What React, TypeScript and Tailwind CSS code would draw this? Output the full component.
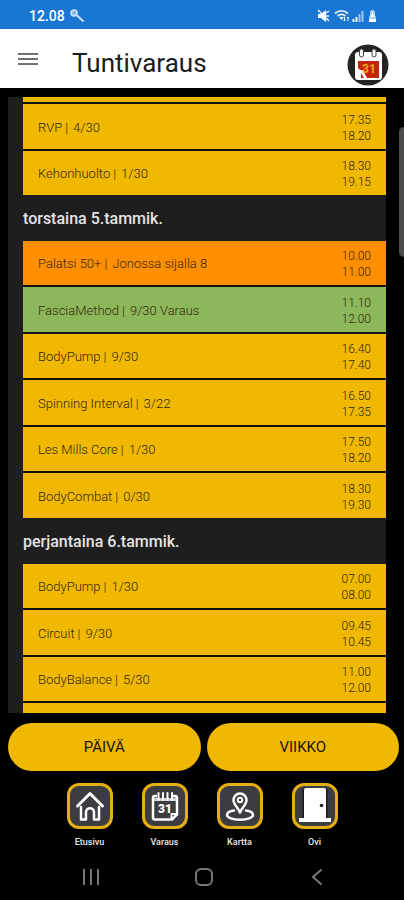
import React from "react";
import clsx from "clsx";

type Status = "open" | "queued" | "booked";

interface GymClass {
  name: string;
  info: string;
  start: string;
  end: string;
  status?: Status;
}

interface Day {
  title?: string;
  classes: (GymClass | null)[];
}

// null is a row that is scrolled out of view
const days: Day[] = [
  {
    classes: [
      null,
      { name: "RVP", info: "4/30", start: "17.35", end: "18.20" },
      { name: "Kehonhuolto", info: "1/30", start: "18.30", end: "19.15" },
    ],
  },
  {
    title: "torstaina 5.tammik.",
    classes: [
      { name: "Palatsi 50+", info: "Jonossa sijalla 8", start: "10.00", end: "11.00", status: "queued" },
      { name: "FasciaMethod", info: "9/30 Varaus", start: "11.10", end: "12.00", status: "booked" },
      { name: "BodyPump", info: "9/30", start: "16.40", end: "17.40" },
      { name: "Spinning Interval", info: "3/22", start: "16.50", end: "17.35" },
      { name: "Les Mills Core", info: "1/30", start: "17.50", end: "18.20" },
      { name: "BodyCombat", info: "0/30", start: "18.30", end: "19.30" },
    ],
  },
  {
    title: "perjantaina 6.tammik.",
    classes: [
      { name: "BodyPump", info: "1/30", start: "07.00", end: "08.00" },
      { name: "Circuit", info: "9/30", start: "09.45", end: "10.45" },
      { name: "BodyBalance", info: "5/30", start: "11.00", end: "12.00" },
      null,
    ],
  },
];

const statusColors: Record<Status, string> = {
  open: "bg-[#f0b800]",
  queued: "bg-[#ff8f00]",
  booked: "bg-[#8db75b]",
};

const rowClass = "h-[44px] even:h-[45px] shrink-0";

const ClassRow: React.FC<{ item: GymClass }> = ({ item }) => (
  <li className={clsx(rowClass, statusColors[item.status ?? "open"])}>
    <button type="button" className="flex h-full w-full items-center justify-between px-[15px] pt-0.5 text-left font-light text-[#33270a]">
      <span className="flex gap-[3px] text-[13px] leading-4">
        <span>{item.name}</span>
        <span>|</span>
        <span className="ml-0.5">{item.info}</span>
      </span>
      <span className="flex flex-col text-xs leading-4">
        <time>{item.start}</time>
        <time>{item.end}</time>
      </span>
    </button>
  </li>
);

const StatusBar = () => (
  <div className="flex h-[29px] shrink-0 items-center justify-between bg-[#1976d2] pr-[27px] pl-[29px] text-white">
    <div className="flex items-center gap-1 pt-[3px]">
      <span className="text-sm leading-4 font-medium">12.08</span>
      <svg width="16" height="16" viewBox="0 0 16 16" fill="none" stroke="#cfe3f7">
        <circle cx="5" cy="5" r="3" fill="#8fb9e4" strokeWidth="1.5" />
        <path d="M7.500 7 14 13" strokeWidth="2" strokeLinecap="round" />
      </svg>
    </div>
    <svg width="60" height="14" viewBox="0 0 60 14" className="mt-0.5" fill="none" stroke="#e8f2fc">
      <path d="M1 5h3l5-4v12l-5-4H1Z" fill="#fff" stroke="none" />
      <path d="M1 1l11 11M9 4l3-2M9 7h3" strokeWidth="1.500" />
      <path d="M18 4.500c4-3.500 9-3.500 13 0M20.500 7c2.500-2 5.500-2 8 0" strokeWidth="1.700" />
      <path d="m24.500 11-2.500-3h5Z" fill="#fff" stroke="none" />
      <path d="M27.500 12V8m-1 3 1 1 1-1M31 8v4m-1-3 1-1 1 1" strokeWidth="1" />
      <path d="M36.500 13v-3M39.500 13V8" strokeWidth="2" />
      <path d="M42.500 13V5M45.500 13V2" strokeWidth="2" strokeOpacity=".65" />
      <path d="M53 2h1V1h3v1h1v4l1 2v5h-7V8l1-2Z" fill="#a9cdf0" stroke="none" />
      <path d="m55.500 3-2 5h4Z M52 10h7v3h-7Z" fill="#fff" stroke="none" />
    </svg>
  </div>
);

const CalendarBadge = () => (
  <svg width="42" height="42" viewBox="0 0 42 42">
    <circle cx="21" cy="21" r="20.500" fill="#242424" />
    <rect x="8" y="8" width="27" height="28" rx="3" fill="#fff" />
    <path d="M11 17h21v17H20l-9-9Z" fill="#c3260f" />
    <path d="M11 24c2 3 4 2 6 2 0 4 2 6 3 8h-7l-2-3Z" fill="#fff" />
    <path d="m14 29 3 5h-3Z" fill="#c3260f" />
    <g fill="#fff" stroke="#444" strokeWidth="1">
      <rect x="12.500" y="5" width="4" height="8" rx="2" />
      <rect x="25" y="5" width="4" height="8" rx="2" />
    </g>
    <text x="22" y="29" textAnchor="middle" fontSize="12" fontWeight="700" fill="#f2a51e">
      31
    </text>
  </svg>
);

const HomeIcon = () => (
  <svg width="40" height="40" viewBox="0 0 40 40" fill="none" stroke="#fff" strokeWidth="2.500" strokeLinecap="round" strokeLinejoin="round">
    <path d="M7.500 20 20 7.500 32.500 20" strokeWidth="3" />
    <path d="M11 21v12.500h5V26c0-5 8-5 8 0v7.500h5V21" />
  </svg>
);

const BookingIcon = () => (
  <svg width="40" height="40" viewBox="0 0 40 40" fill="none" stroke="#fff" strokeWidth="2.500">
    <path d="M12 10H9.500Q8 10 8 12v19.500Q8 33.500 10 33.500h17l5-5V12q0-2-2-2h-2" />
    <path d="M26.500 33.500V28H32" strokeWidth="2" />
    <path d="M9 13.500h22" strokeWidth="3" strokeOpacity=".75" />
    <path d="M13.500 7v7M18 7v7M22.500 7v7M27 7v7" strokeWidth="2" strokeLinecap="round" />
    <text x="20" y="27" textAnchor="middle" fontSize="12" fontWeight="900" fill="#fff" stroke="none">
      31
    </text>
  </svg>
);

const MapIcon = () => (
  <svg width="40" height="40" viewBox="0 0 40 40" fill="none" stroke="#fff" strokeWidth="2.500">
    <path d="M20 26.500c-2-5-6.500-8-6.500-12.500a6.500 6.500 0 0 1 13 0c0 4.500-4.500 7.500-6.500 12.500Z" strokeLinejoin="round" />
    <circle cx="20" cy="14" r="2.200" strokeWidth="2" />
    <path d="M14 24.500c-4 .7-7 2.200-7 4.300 0 3 6 5 13 5s13-2 13-5c0-2.100-3-3.600-7-4.300" strokeLinecap="round" />
  </svg>
);

const DoorIcon = () => (
  <svg width="40" height="40" viewBox="0 0 40 40">
    <path d="M8.500 3v29M31.500 3v29" stroke="#17191c" strokeWidth="2" />
    <path d="M9 32V4q0-2 2-2h18q2 0 2 2v28h5v4H4v-4Z" fill="#fff" />
    <circle cx="26.500" cy="19.500" r="1.800" fill="#222" />
  </svg>
);

const tabs = [
  { label: "Etusivu", icon: <HomeIcon /> },
  { label: "Varaus", icon: <BookingIcon /> },
  { label: "Kartta", icon: <MapIcon /> },
  { label: "Ovi", icon: <DoorIcon /> },
];

const App: React.FC = () => {
  return (
    <div className="relative flex h-screen flex-col overflow-hidden bg-black font-[Roboto,sans-serif]">
      <StatusBar />

      <header className="flex h-[59px] shrink-0 items-center bg-white pr-[15px] pl-[18px]">
        <button type="button" aria-label="Valikko" className="flex w-5 flex-col gap-[3px]">
          <span className="h-0.5 bg-[#707070]" />
          <span className="h-0.5 bg-[#707070]" />
          <span className="h-0.5 bg-[#707070]" />
        </button>
        <h1 className="mt-2 ml-[34px] flex-1 text-[26px] leading-8 text-[#1c1c1c]">Tuntivaraus</h1>
        <button type="button" aria-label="Kalenteri" className="mt-3">
          <CalendarBadge />
        </button>
      </header>

      <main className="mt-[9px] mr-[18px] ml-2 min-h-0 flex-1 overflow-hidden bg-[#1e1e1e] pl-[15px]">
        <div className="-mt-[39px]">
          {days.map((day, i) => (
            <section key={i}>
              {day.title && (
                <h2 className="flex h-[46px] items-center pt-0.5 text-base font-medium text-[#e4e4e4]">{day.title}</h2>
              )}
              <ul className="flex flex-col gap-0.5 bg-[#121212]">
                {day.classes.map((item, j) =>
                  item ? <ClassRow key={j} item={item} /> : <li key={j} aria-hidden className={clsx(rowClass, statusColors.open)} />
                )}
              </ul>
            </section>
          ))}
        </div>
      </main>

      <div className="mt-2.5 flex shrink-0 gap-1.5 pr-[5px] pl-2">
        <button type="button" className="h-12 flex-1 rounded-full bg-[#f0b800] text-[15px] text-[#1c1600]">
          PÄIVÄ
        </button>
        <button type="button" className="h-12 flex-1 rounded-full bg-[#f0b800] text-[15px] text-[#1c1600]">
          VIIKKO
        </button>
      </div>

      <nav className="mt-3 flex shrink-0 justify-center gap-[29px]">
        {tabs.map((tab) => (
          <a key={tab.label} href="#" className="flex w-[46px] flex-col items-center gap-[7px] text-[9px] leading-3 font-medium text-[#e8e8e8]">
            <span className="flex h-[46px] w-[46px] items-center justify-center overflow-hidden rounded-xl border-3 border-[#e5ae12] bg-[#3b3d40]">
              {tab.icon}
            </span>
            {tab.label}
          </a>
        ))}
      </nav>

      <div className="flex h-[52px] shrink-0 items-center justify-between pt-1.5 pr-[77px] pl-[81px]">
        <button type="button" aria-label="Viimeisimmät" className="flex w-5 justify-center">
          <svg width="18" height="18" viewBox="0 0 18 18" stroke="#777" strokeWidth="2">
            <path d="M2 1v16M9 1v16M16 1v16" />
          </svg>
        </button>
        <button type="button" aria-label="Koti" className="flex w-5 justify-center">
          <svg width="20" height="20" viewBox="0 0 20 20" fill="none" stroke="#777" strokeWidth="2">
            <rect x="2" y="2" width="16" height="16" rx="5" />
          </svg>
        </button>
        <button type="button" aria-label="Takaisin" className="flex w-5 justify-center">
          <svg width="12" height="18" viewBox="0 0 12 18" fill="none" stroke="#777" strokeWidth="2">
            <path d="M10.500 1.500 2 9l8.500 7.500" />
          </svg>
        </button>
      </div>

      {/* edge panel handle */}
      <div className="absolute top-[127px] right-0 h-[130px] w-[5px] rounded-l-md bg-[#4d4d4d]" />
    </div>
  );
};

export default App;
